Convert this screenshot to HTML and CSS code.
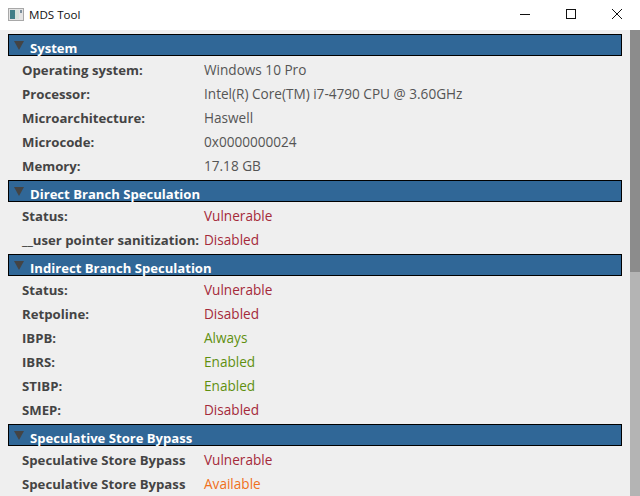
FILE: index.html
```html
<!DOCTYPE html>
<html lang="en">
<head>
    <meta charset="UTF-8">
    <title>MDS Tool</title>
    <link rel="stylesheet" href="styles.css">
</head>
<body>

    <div class="titlebar">
        <svg class="app-icon" width="16" height="16" viewBox="0 0 16 16">
            <rect x="0.5" y="1.5" width="15" height="12" fill="#e4e4e4" stroke="#a8a8a8"/>
            <rect x="2" y="3" width="5" height="9" fill="#3f7f86"/>
            <rect x="7" y="3" width="4" height="9" fill="#d5e2da"/>
            <rect x="12" y="3" width="2" height="3" fill="#7c8f9c"/>
        </svg>
        <span class="title">MDS Tool</span>
        <div class="window-buttons">
            <svg width="46" height="30" viewBox="0 0 46 30"><path d="M18 14.5h10" stroke="#111" fill="none"/></svg>
            <svg width="46" height="30" viewBox="0 0 46 30"><rect x="18.5" y="9.5" width="9" height="9" stroke="#111" fill="none"/></svg>
            <svg width="46" height="30" viewBox="0 0 46 30"><path d="M18 9l10 10M28 9l-10 10" stroke="#111" fill="none"/></svg>
        </div>
    </div>

    <div class="window">
        <div class="content">
            <div class="section-head"><span class="arrow"></span><span>System</span></div>
            <div class="rows">
                <div class="row"><span class="label">Operating system:</span><span class="value">Windows 10 Pro</span></div>
                <div class="row"><span class="label">Processor:</span><span class="value">Intel(R) Core(TM) i7-4790 CPU @ 3.60GHz</span></div>
                <div class="row"><span class="label">Microarchitecture:</span><span class="value">Haswell</span></div>
                <div class="row"><span class="label">Microcode:</span><span class="value">0x0000000024</span></div>
                <div class="row"><span class="label">Memory:</span><span class="value">17.18 GB</span></div>
            </div>

            <div class="section-head"><span class="arrow"></span><span>Direct Branch Speculation</span></div>
            <div class="rows">
                <div class="row"><span class="label">Status:</span><span class="value bad">Vulnerable</span></div>
                <div class="row"><span class="label">__user pointer sanitization:</span><span class="value bad">Disabled</span></div>
            </div>

            <div class="section-head"><span class="arrow"></span><span>Indirect Branch Speculation</span></div>
            <div class="rows">
                <div class="row"><span class="label">Status:</span><span class="value bad">Vulnerable</span></div>
                <div class="row"><span class="label">Retpoline:</span><span class="value bad">Disabled</span></div>
                <div class="row"><span class="label">IBPB:</span><span class="value good">Always</span></div>
                <div class="row"><span class="label">IBRS:</span><span class="value good">Enabled</span></div>
                <div class="row"><span class="label">STIBP:</span><span class="value good">Enabled</span></div>
                <div class="row"><span class="label">SMEP:</span><span class="value bad">Disabled</span></div>
            </div>

            <div class="section-head"><span class="arrow"></span><span>Speculative Store Bypass</span></div>
            <div class="rows">
                <div class="row"><span class="label">Speculative Store Bypass</span><span class="value bad">Vulnerable</span></div>
                <div class="row"><span class="label">Speculative Store Bypass</span><span class="value warn">Available</span></div>
            </div>
        </div>
        <div class="scrollbar"><div class="thumb"></div></div>
    </div>

</body>
</html>
```

FILE: styles.css
```css
html, body {
    height: 100%;
}
body {
    margin: 0;
    overflow: hidden;
    font-family: "Open Sans", sans-serif;
    font-size: 12px;
    background-color: #efefef;
    color: #444;
    display: flex;
    flex-direction: column;
}

.titlebar {
    height: 30px;
    flex: none;
    background-color: #fff;
    display: flex;
    align-items: center;
    padding-left: 8px;
}
.app-icon {
    margin-right: 5px;
}
.title {
    font-size: 11.6px;
    color: #111;
    padding-bottom: 2px;
}
.window-buttons {
    margin-left: auto;
    display: flex;
}

.window {
    flex: 1;
    min-height: 0;
    display: flex;
}
.content {
    flex: 1;
    min-width: 0;
    padding: 4px 8px 0 8px;
}
.scrollbar {
    width: 10px;
    flex: none;
    background-color: #b4b4b4;
}
.thumb {
    height: 242px;
    background-color: #8c8c8c;
}

.section-head {
    height: 22px;
    box-sizing: border-box;
    border: 1px solid #000;
    background-color: #306797;
    color: #fff;
    font-weight: 700;
    font-size: 13.1px;
    display: flex;
    align-items: flex-end;
    padding-left: 21px;
    line-height: 13px;
    position: relative;
}
.section-head .arrow {
    position: absolute;
    left: 5px;
    top: 6px;
    width: 0;
    height: 0;
    border-left: 5px solid transparent;
    border-right: 5px solid transparent;
    border-top: 9px solid #444;
}

.rows {
    padding: 2px 0;
}
.row {
    height: 24px;
    display: flex;
    align-items: center;
    padding-left: 14px;
}
.label {
    width: 182px;
    flex: none;
    font-weight: 700;
    font-size: 13.2px;
    white-space: nowrap;
}
.value {
    font-size: 13.6px;
    color: #555;
    padding-bottom: 1px;
}
.bad {
    color: #a52a3a;
}
.good {
    color: #5f8f10;
}
.warn {
    color: #f07020;
}
```
